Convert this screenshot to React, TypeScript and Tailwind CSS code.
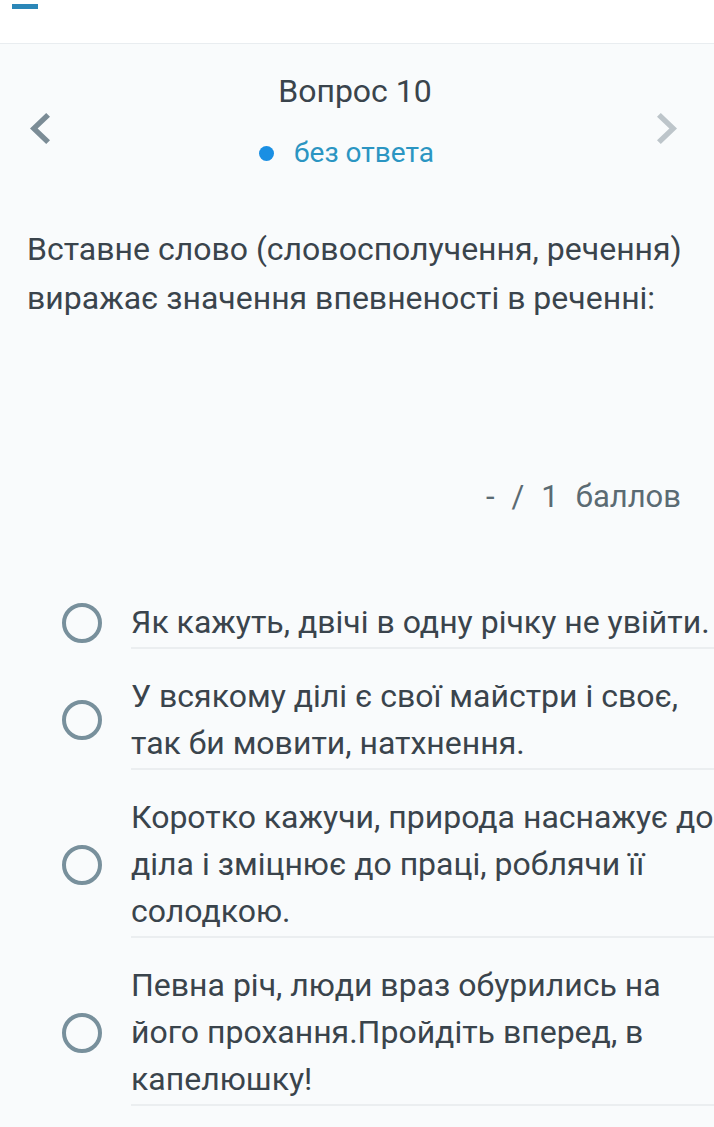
const options: string[][] = [
  ["Як кажуть, двічі в одну річку не увійти."],
  ["У всякому ділі є свої майстри і своє,", "так би мовити, натхнення."],
  [
    "Коротко кажучи, природа наснажує до",
    "діла і зміцнює до праці, роблячи її",
    "солодкою.",
  ],
  [
    "Певна річ, люди враз обурились на",
    "його прохання.Пройдіть вперед, в",
    "капелюшку!",
  ],
];

const Chevron = ({ dir, className }: { dir: "left" | "right"; className: string }) => (
  <svg
    viewBox="8 6 7.41 12"
    width="20"
    height="31"
    preserveAspectRatio="none"
    className={className}
  >
    {dir === "left" ? (
      <path d="M15.41 7.41L14 6l-6 6 6 6 1.41-1.41L10.83 12z" fill="currentColor" />
    ) : (
      <path d="M8 7.41L9.41 6l6 6-6 6L8 16.59 12.58 12z" fill="currentColor" />
    )}
  </svg>
);

const Radio = () => (
  <div className="w-[40px] h-[40px] shrink-0 rounded-full border-[4px] border-[#78909c]" />
);

export default function App() {
  return (
    <div
      className="min-h-[1127px] w-[714px] overflow-hidden bg-[#f9fbfc] text-[#37474f]"
      style={{ fontFamily: "Roboto, 'Noto Sans', sans-serif" }}
    >
      {/* Top bar */}
      <div className="h-[44px] bg-white border-b border-[#e9edf0] relative">
        <div className="absolute left-[12px] top-[4px] w-[26px] h-[5px] bg-[#2b87b8]" />
      </div>

      {/* Question nav */}
      <div className="grid grid-cols-[auto_1fr_auto] items-center pt-[27px] px-[30px] pr-[37px]">
        <Chevron dir="left" className="text-[#7b8c96] mt-[17px]" />
        <div className="flex flex-col items-center">
          <div className="text-[32px] leading-[40px] text-[#3a444c] pl-[3px]">Вопрос 10</div>
          <div className="flex items-center gap-[20px] mt-[26px] mr-[14px]">
            <span className="w-[15px] h-[15px] rounded-full bg-[#1a8fe3]" />
            <span className="text-[28px] leading-[32px] text-[#2b95c2]">без ответа</span>
          </div>
        </div>
        <Chevron dir="right" className="text-[#bdc5ca] mt-[17px]" />
      </div>

      {/* Question text */}
      <div className="px-[27px] pt-[56px] text-[32px] leading-[49px] text-[#3a444c]">
        Вставне слово (словосполучення, речення)
        <br />
        виражає значення впевненості в реченні:
      </div>

      {/* Points */}
      <div className="flex justify-end pr-[33px] pt-[154px] text-[31px] leading-[40px] text-[#5b6b73] gap-[17px]">
        <span>-</span>
        <span>/</span>
        <span>1</span>
        <span>баллов</span>
      </div>

      {/* Options */}
      <div className="pt-[80px]">
        {options.map((lines, i) => {
          const pad = i === 0 ? "pt-[2px]" : "pt-[24px]";
          return (
            <div key={i} className="flex gap-[29px] pl-[62px]">
              <div className={`flex items-center pb-[3px] ${pad}`}>
                <Radio />
              </div>
              <div
                className={`flex-1 border-b-2 border-[#ebeef0] pb-[1px] text-[32px] leading-[47px] text-[#3a444c] whitespace-nowrap ${pad}`}
              >
                {lines.map((l, j) => (
                  <div key={j}>{l}</div>
                ))}
              </div>
            </div>
          );
        })}
      </div>
    </div>
  );
}
